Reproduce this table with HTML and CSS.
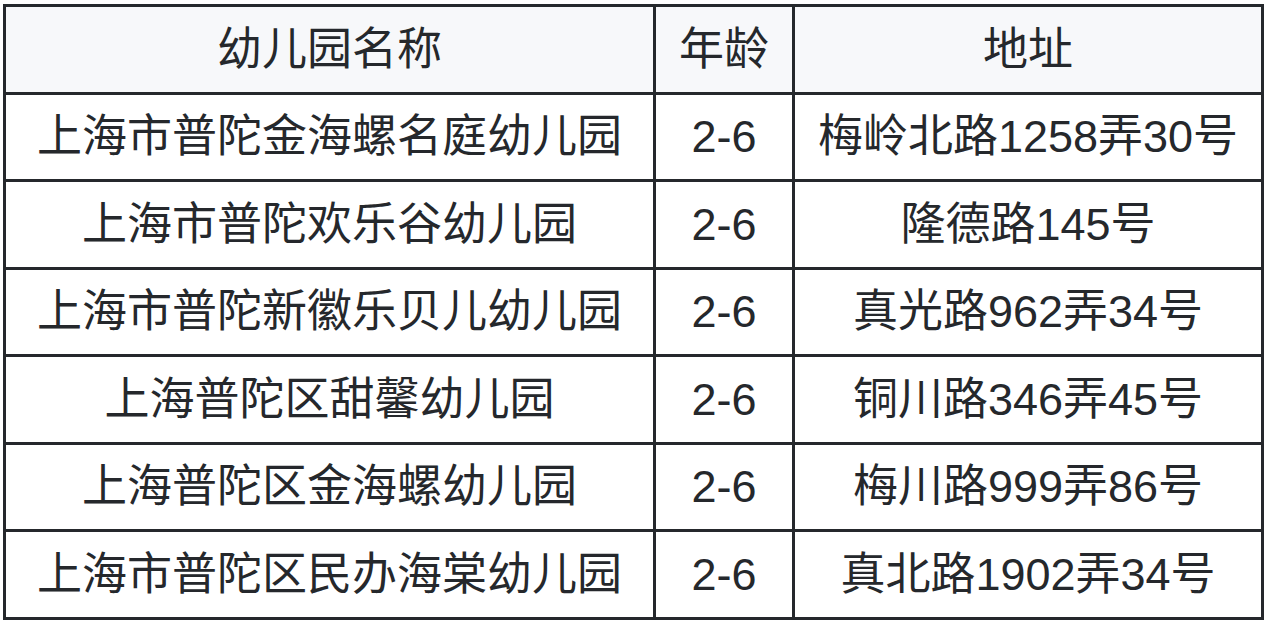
FILE: index.html
```html
<!DOCTYPE html>
<html lang="zh-CN">
<head>
<meta charset="utf-8">
<title>幼儿园列表</title>
<link rel="stylesheet" href="styles.css">
</head>
<body>
<table class="kg-table">
  <colgroup>
    <col class="col-name">
    <col class="col-age">
    <col class="col-addr">
  </colgroup>
  <thead>
    <tr><th>幼儿园名称</th><th>年龄</th><th>地址</th></tr>
  </thead>
  <tbody>
    <tr><td>上海市普陀金海螺名庭幼儿园</td><td>2-6</td><td>梅岭北路1258弄30号</td></tr>
    <tr><td>上海市普陀欢乐谷幼儿园</td><td>2-6</td><td>隆德路145号</td></tr>
    <tr><td>上海市普陀新徽乐贝儿幼儿园</td><td>2-6</td><td>真光路962弄34号</td></tr>
    <tr><td>上海普陀区甜馨幼儿园</td><td>2-6</td><td>铜川路346弄45号</td></tr>
    <tr><td>上海普陀区金海螺幼儿园</td><td>2-6</td><td>梅川路999弄86号</td></tr>
    <tr><td>上海市普陀区民办海棠幼儿园</td><td>2-6</td><td>真北路1902弄34号</td></tr>
  </tbody>
</table>
</body>
</html>
```
FILE: styles.css
```css
html, body {
  margin: 0;
  padding: 0;
  background: #ffffff;
}
body {
  padding: 4px 0 0 3px;
  font-family: "Liberation Sans", "Noto Sans CJK SC", sans-serif;
  color: #25282c;
}
.kg-table {
  table-layout: fixed;
  width: 1261px;
  border-collapse: separate;
  border-spacing: 3px;
  background: #25282c;
}
.col-name { width: 647px; }
.col-age { width: 136px; }
.col-addr { width: 466px; }
.kg-table th,
.kg-table td {
  height: 84.5px;
  padding: 0;
  text-align: center;
  vertical-align: middle;
  font-size: 45px;
  font-weight: 400;
  line-height: 1;
  white-space: nowrap;
  background: #ffffff;
  color: #25282c;
}
.kg-table th {
  background: #f7f8fa;
}
```
